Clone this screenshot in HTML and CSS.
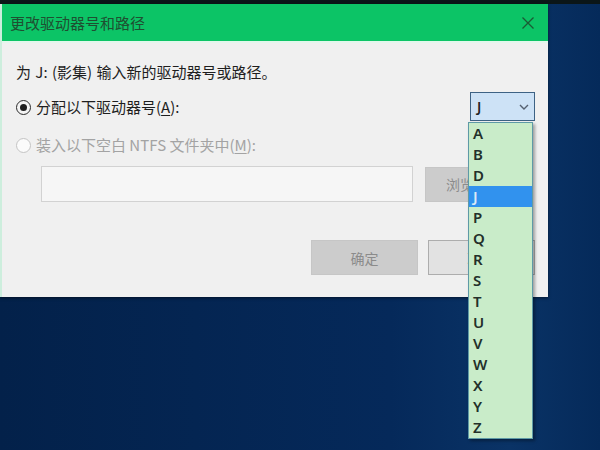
FILE: index.html
```html
<!DOCTYPE html>
<html lang="zh-CN">
<head>
<meta charset="utf-8">
<title>更改驱动器号和路径</title>
<link rel="stylesheet" href="styles.css">
</head>
<body>
<div class="desktop">
  <div class="topstrip"></div>
  <div class="window">
    <div class="titlebar">
      <span class="title">更改驱动器号和路径</span>
      <svg class="close" width="14" height="14" viewBox="0 0 14 14"><path d="M1.5 1.5 L12.5 12.5 M12.5 1.5 L1.5 12.5" stroke="#1c5a34" stroke-width="1.3" fill="none"/></svg>
    </div>
    <div class="content">
      <div class="intro">为 J: (影集) 输入新的驱动器号或路径。</div>
      <div class="row row-assign">
        <label class="radio-label"><span class="radio checked"></span>分配以下驱动器号(<u>A</u>):</label>
        <div class="select"><span class="select-value">J</span>
          <svg class="chev" width="10" height="6" viewBox="0 0 10 6"><path d="M1 1 L5 5 L9 1" stroke="#556070" stroke-width="1.4" fill="none"/></svg>
        </div>
      </div>
      <div class="row row-mount">
        <label class="radio-label disabled"><span class="radio"></span>装入以下空白 NTFS 文件夹中(<u>M</u>):</label>
      </div>
      <div class="row row-path">
        <div class="pathbox"></div>
        <div class="btn btn-disabled btn-browse">浏览(R)...</div>
      </div>
      <div class="row row-buttons">
        <div class="btn btn-disabled">确定</div>
        <div class="btn btn-cancel">取消</div>
      </div>
    </div>
  </div>
  <ul class="droplist">
    <li>A</li><li>B</li><li>D</li><li class="sel">J</li><li>P</li><li>Q</li><li>R</li><li>S</li><li>T</li><li>U</li><li>V</li><li>W</li><li>X</li><li>Y</li><li>Z</li>
  </ul>
</div>
</body>
</html>
```
FILE: styles.css
```css
html, body {
  margin: 0;
  padding: 0;
}
body {
  width: 600px;
  height: 450px;
  overflow: hidden;
  font-family: "Noto Sans CJK SC", "Noto Sans", sans-serif;
}
.desktop {
  position: relative;
  width: 600px;
  height: 450px;
  background: linear-gradient(90deg, #03214a 0%, #05295a 65%, #0a3366 85%, #052a5a 100%);
}
.topstrip {
  height: 4px;
  background: #0b1618;
}
.window {
  position: absolute;
  left: 0;
  top: 4px;
  width: 548px;
  height: 293px;
  background: #f0f0f0;
  border-left: 2px solid #cdeedd;
  box-sizing: border-box;
  display: flex;
  flex-direction: column;
  box-shadow: 0 1px 3px rgba(0,0,0,0.5);
}
.titlebar {
  height: 37px;
  background: #0cc466;
  display: flex;
  align-items: center;
  justify-content: space-between;
  padding: 0 13px 0 8px;
  border-bottom: 2px solid #e2f7ec;
  flex-shrink: 0;
}
.title {
  font-size: 15px;
  color: #1f4f31;
  line-height: 1;
}
.close {
  display: block;
}
.content {
  display: flex;
  flex-direction: column;
  padding: 0 13px 0 14px;
}
.intro {
  font-size: 15px;
  color: #1e1e1e;
  line-height: 20px;
  margin-top: 19px;
  word-spacing: 1px;
}
.row {
  display: flex;
  align-items: center;
}
.row-assign {
  margin-top: 10px;
  height: 29px;
  justify-content: space-between;
}
.radio-label {
  display: flex;
  align-items: center;
  font-size: 15px;
  line-height: 20px;
  color: #1e1e1e;
}
.radio-label.disabled {
  color: #a3a3a3;
}
.radio-label u {
  text-underline-offset: 2px;
}
.radio {
  width: 13px;
  height: 13px;
  border: 1px solid #c4c4c4;
  border-radius: 50%;
  background: #fbfbfb;
  margin-right: 5px;
  margin-top: 1px;
  position: relative;
  flex-shrink: 0;
}
.radio.checked {
  border-color: #2a2a2a;
  background: #f4f4f4;
}
.radio.checked::after {
  content: "";
  position: absolute;
  left: 3px;
  top: 3px;
  width: 7px;
  height: 7px;
  border-radius: 50%;
  background: #1e1e1e;
}
.select {
  width: 65px;
  height: 29px;
  box-sizing: border-box;
  border: 1px solid #3d6284;
  background: #cde2f6;
  display: flex;
  align-items: center;
  justify-content: space-between;
  padding: 0 5px 0 6px;
}
.select-value {
  font-family: "Noto Sans", sans-serif;
  font-size: 14px;
  color: #222;
  font-weight: 600;
}
.row-mount {
  margin-top: 14px;
  height: 20px;
}
.row-path {
  margin-top: 11px;
  height: 36px;
  padding-left: 25px;
  gap: 12px;
}
.pathbox {
  width: 372px;
  height: 36px;
  box-sizing: border-box;
  border: 1px solid #d2d2d2;
  background: #f6f6f6;
}
.btn {
  width: 107px;
  height: 35px;
  box-sizing: border-box;
  display: flex;
  align-items: center;
  justify-content: center;
  font-size: 14px;
  flex-shrink: 0;
}
.btn-browse {
  justify-content: flex-start;
  padding-left: 20px;
}
.btn-disabled {
  background: #cccccc;
  color: #8b8b8b;
  border: 1px solid #c6c6c6;
}
.btn-cancel {
  background: #e2e2e2;
  border: 1px solid #adadad;
  color: #222;
}
.row-buttons {
  margin-top: 38px;
  justify-content: flex-end;
  gap: 10px;
}
.droplist {
  position: absolute;
  left: 468px;
  top: 122px;
  width: 65px;
  margin: 0;
  padding: 0;
  list-style: none;
  background: #c9ecc9;
  border: 1px solid #5e9aa6;
  box-sizing: border-box;
  box-shadow: 2px 2px 3px rgba(0,0,0,0.35);
}
.droplist li {
  height: 21px;
  line-height: 21px;
  padding-left: 4px;
  font-family: "Noto Sans", sans-serif;
  font-size: 15px;
  font-weight: 600;
  color: #23302a;
}
.droplist li.sel {
  background: #3192ee;
  color: #dce9f7;
}
```
